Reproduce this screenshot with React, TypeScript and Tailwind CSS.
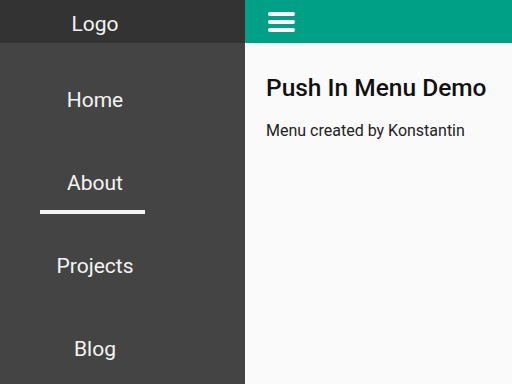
const links = ["Home", "About", "Projects", "Blog"];

export default function App() {
	return (
		<div className="flex h-[384px] w-[512px] overflow-hidden font-['Roboto',sans-serif]">
			<aside className="flex w-[245px] shrink-0 flex-col bg-[#444444]">
				<div className="flex h-[43px] shrink-0 items-center bg-[#333333] pt-[6px]">
					<div className="w-[190px] text-center text-[21px] text-[#f4f4f4]">Logo</div>
				</div>
				<nav className="w-[190px] shrink-0 pt-[16px]">
					{links.map((link) => (
						<a
							key={link}
							href="#"
							className="relative flex h-[83px] items-center justify-center text-[21px] text-[#f4f4f4]"
						>
							{link}
							{link === "About" && (
								<span className="absolute left-[40px] top-[68px] h-[4px] w-[105px] bg-[#f4f4f4]" />
							)}
						</a>
					))}
				</nav>
			</aside>

			<div className="flex flex-1 flex-col bg-[#fafafa]">
				<header className="flex h-[43px] shrink-0 items-center bg-[#00a086] pl-[23px]">
					<svg width="27" height="20" viewBox="0 0 27 20">
						<rect x="0" y="0" width="27" height="4" rx="2" fill="#ffffff" />
						<rect x="0" y="8" width="27" height="4" rx="2" fill="#ffffff" />
						<rect x="0" y="16" width="27" height="4" rx="2" fill="#ffffff" />
					</svg>
				</header>
				<main className="px-[21px] pt-[29px]">
					<h1 className="text-[24.5px] font-medium leading-[32px] text-[#111111]">Push In Menu Demo</h1>
					<p className="mt-[15px] text-[16px] text-[#222222]">Menu created by Konstantin</p>
				</main>
			</div>
		</div>
	);
}
